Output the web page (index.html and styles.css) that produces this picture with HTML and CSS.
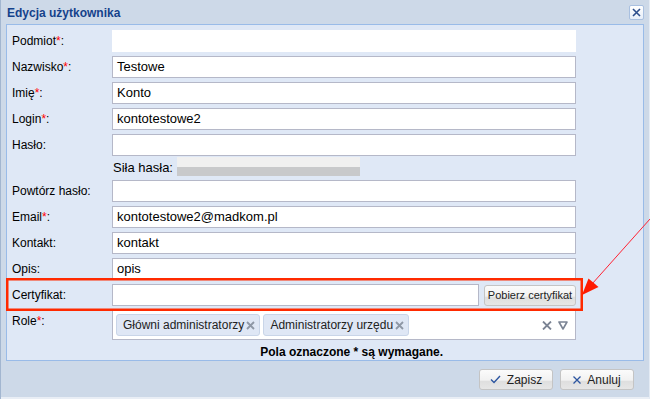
FILE: index.html
```html
<!DOCTYPE html>
<html lang="pl">
<head>
    <meta charset="UTF-8">
    <meta name="viewport" content="width=device-width, initial-scale=1.0">
    <title>Edycja użytkownika</title>
    <link rel="stylesheet" href="styles.css">
</head>
<body>
    <div class="window">
        <div class="window-header">
            <span class="window-title">Edycja użytkownika</span>
            <span class="tool-close">
                <svg width="9" height="9" viewBox="0 0 9 9"><path d="M1 1 L8 8 M8 1 L1 8" stroke="#2b4d8c" stroke-width="1.6" fill="none"/></svg>
            </span>
        </div>

        <div class="window-body">
            <div class="row">
                <label>Podmiot<em>*</em>:</label>
                <div class="field field-display"></div>
            </div>
            <div class="row">
                <label>Nazwisko<em>*</em>:</label>
                <div class="field">Testowe</div>
            </div>
            <div class="row">
                <label>Imię<em>*</em>:</label>
                <div class="field">Konto</div>
            </div>
            <div class="row">
                <label>Login<em>*</em>:</label>
                <div class="field">kontotestowe2</div>
            </div>
            <div class="row">
                <label>Hasło:</label>
                <div class="field"></div>
            </div>
            <div class="row strength">
                <span class="strength-label">Siła hasła:</span>
                <div class="strength-bar"></div>
            </div>
            <div class="row">
                <label>Powtórz hasło:</label>
                <div class="field"></div>
            </div>
            <div class="row">
                <label>Email<em>*</em>:</label>
                <div class="field">kontotestowe2@madkom.pl</div>
            </div>
            <div class="row">
                <label>Kontakt:</label>
                <div class="field">kontakt</div>
            </div>
            <div class="row">
                <label>Opis:</label>
                <div class="field">opis</div>
            </div>
            <div class="row">
                <label>Certyfikat:</label>
                <div class="field"></div>
                <button class="btn btn-small">Pobierz certyfikat</button>
            </div>
            <div class="row row-tags">
                <label>Role<em>*</em>:</label>
                <div class="field field-tags">
                    <span class="tag">Główni administratorzy<svg class="tag-x" width="9" height="9" viewBox="0 0 9 9"><path d="M1 1 L8 8 M8 1 L1 8" stroke="#8e97a5" stroke-width="1.8" fill="none"/></svg></span>
                    <span class="tag">Administratorzy urzędu<svg class="tag-x" width="9" height="9" viewBox="0 0 9 9"><path d="M1 1 L8 8 M8 1 L1 8" stroke="#8e97a5" stroke-width="1.8" fill="none"/></svg></span>
                    <span class="tag-tools">
                        <svg width="10" height="9" viewBox="0 0 10 9"><path d="M1 0.5 L9 8.5 M9 0.5 L1 8.5" stroke="#7b8494" stroke-width="1.8" fill="none"/></svg>
                        <svg width="10" height="9" viewBox="0 0 10 9"><path d="M1 1 H9 L5 8 Z" stroke="#7b8494" stroke-width="1.6" fill="none" stroke-linejoin="round"/></svg>
                    </span>
                </div>
            </div>
            <p class="required-note">Pola oznaczone * są wymagane.</p>
        </div>

        <div class="window-footer">
            <button class="btn btn-footer">
                <svg width="11" height="9" viewBox="0 0 11 9"><path d="M1 4.5 L4 7.5 L10 1" stroke="#2c55a0" stroke-width="1.4" fill="none"/></svg>
                Zapisz
            </button>
            <button class="btn btn-footer">
                <svg width="8" height="8" viewBox="0 0 8 8"><path d="M0.5 0.5 L7.5 7.5 M7.5 0.5 L0.5 7.5" stroke="#2c55a0" stroke-width="1.3" fill="none"/></svg>
                Anuluj
            </button>
        </div>

        <!-- annotation drawn over the screenshot -->
        <svg class="annotation" width="650" height="399" viewBox="0 0 650 399">
            <rect x="7.25" y="279.25" width="574.5" height="30.5" fill="none" stroke="#ff2a00" stroke-width="2.5"/>
            <line x1="650" y1="219" x2="592" y2="284" stroke="#f23" stroke-width="1"/>
            <polygon points="582,295 588.5,278.5 598.5,287" fill="#ff1a00"/>
        </svg>
    </div>
</body>
</html>
```

FILE: styles.css
```css
body {
    margin: 0;
    padding: 0;
    font-family: 'Liberation Sans', Arial, sans-serif;
    font-size: 12px;
    color: #000;
}

.window {
    position: relative;
    width: 650px;
    height: 399px;
    box-sizing: border-box;
    padding: 0 6px;
    background: #cdd9e8;
    box-shadow: inset 1px 0 0 #a2b6d0, inset -1px 0 0 #e4ebf4, inset 0 -2px 0 #e9eef5;
}

.window-header {
    display: flex;
    justify-content: space-between;
    align-items: flex-start;
    height: 24px;
    padding-left: 1px;
}

.window-title {
    font-weight: bold;
    font-size: 12px;
    line-height: 24px;
    padding-top: 1px;
    color: #15428b;
}

.tool-close {
    display: flex;
    align-items: center;
    justify-content: center;
    width: 13px;
    height: 13px;
    margin-top: 5px;
    border: 1px solid #a9c0e0;
    border-radius: 2px;
    background: linear-gradient(#ffffff, #e6eef9);
}

.window-body {
    height: 337px;
    box-sizing: border-box;
    padding: 5px 67px 0 5px;
    background: #dfe8f6;
    border: 1px solid #99bbe8;
}

.row {
    display: flex;
    align-items: center;
    height: 22px;
    margin-bottom: 4px;
}

.row label {
    width: 100px;
    flex-shrink: 0;
}

.row label em {
    font-style: normal;
    color: #f00;
}

.field {
    flex: 1;
    height: 22px;
    box-sizing: border-box;
    padding: 0 4px;
    border: 1px solid #b5b8c8;
    background: #fff;
    font-size: 13px;
    line-height: 20px;
}

.field-display {
    border-color: #fff;
}

.strength {
    height: 19px;
    margin-top: -3px;
    padding-left: 101px;
    align-items: flex-end;
}

.strength-label {
    font-size: 13px;
    line-height: 16px;
}

.strength-bar {
    width: 183px;
    height: 19px;
    margin-left: 4px;
    background: linear-gradient(#f0f0f0 0, #f0f0f0 52%, #c8c9cb 52%, #c8c9cb 100%);
}

.btn {
    font-family: 'Liberation Sans', Arial, sans-serif;
    color: #222;
    border: 1px solid #c4c4c4;
    border-radius: 3px;
    background: linear-gradient(#fbfbfb 0, #f1f1f1 55%, #dedede 56%, #e6e6e6 100%);
    cursor: pointer;
    padding: 0;
}

.btn-small {
    width: 92px;
    height: 21px;
    margin-left: 5px;
    font-size: 11px;
}

.row-tags {
    height: 30px;
    align-items: flex-start;
}

.row-tags label {
    line-height: 22px;
}

.field-tags {
    display: flex;
    align-items: flex-start;
    gap: 3px;
    height: 30px;
    padding: 3px 7px 0 3px;
    font-size: 12px;
}

.tag {
    display: flex;
    align-items: center;
    height: 22px;
    box-sizing: border-box;
    padding: 0 4px 0 6px;
    border: 1px solid #c9d5e8;
    border-radius: 3px;
    background: #dfe7f5;
    color: #222;
}

.tag-x {
    margin-left: 2px;
}

.tag-tools {
    display: flex;
    gap: 6px;
    margin-left: auto;
    margin-top: 7px;
}

.required-note {
    margin: 4px 0 0;
    line-height: 16px;
    font-weight: bold;
    text-align: right;
    padding-right: 133px;
}

.window-footer {
    display: flex;
    justify-content: flex-end;
    gap: 7px;
    padding: 8px 10px 0 0;
}

.btn-footer {
    display: flex;
    align-items: center;
    justify-content: center;
    gap: 6px;
    width: 74px;
    height: 21px;
    font-size: 12px;
}

.annotation {
    position: absolute;
    top: 0;
    left: 0;
    pointer-events: none;
}
```
